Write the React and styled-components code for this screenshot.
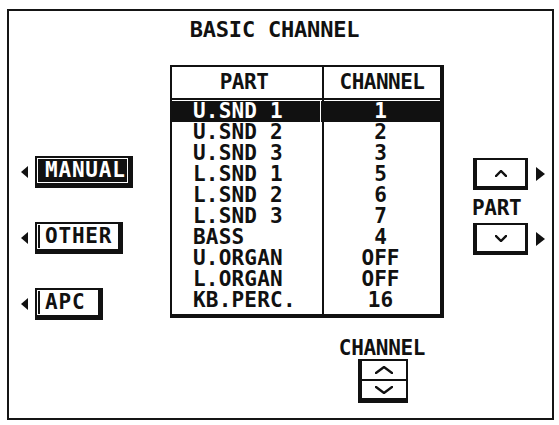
import React from "react";
import styled, { createGlobalStyle } from "styled-components";

const Global = createGlobalStyle`
  html, body { margin: 0; padding: 0; background: #fff; }
  body { font-family: "DejaVu Sans Mono", "Liberation Mono", monospace; font-weight: bold; color: #111; }
`;

const Frame = styled.div`
  box-sizing: border-box;
  margin: 9px 0 0 7px;
  width: 547px;
  height: 411px;
  border: 2px solid #151515;
  display: grid;
  grid-template-columns: 161px 274px 1fr;
  grid-template-rows: 54px 253px 1fr;
`;

const Title = styled.h1`
  grid-column: 1 / -1;
  margin: 0;
  padding: 8px 12px 0 0;
  text-align: center;
  font-size: 22px;
  line-height: 22px;
  font-weight: bold;
  letter-spacing: -0.2px;
`;

const SideKeys = styled.div`
  display: flex;
  flex-direction: column;
  gap: 34px;
  padding: 91px 0 0 12px;
`;

const KeyRow = styled.div`
  display: flex;
  align-items: center;
  gap: 7px;
`;

const LeftArrow = styled.span`
  width: 0;
  height: 0;
  border-top: 6px solid transparent;
  border-bottom: 6px solid transparent;
  border-right: 7px solid #111;
`;

const RightArrow = styled.span`
  width: 0;
  height: 0;
  border-top: 7px solid transparent;
  border-bottom: 7px solid transparent;
  border-left: 9px solid #111;
`;

const SoftKey = styled.span`
  box-sizing: border-box;
  display: flex;
  width: ${(p) => p.$width}px;
  height: 32px;
  border: 2px solid #111;
  border-right-width: 5px;
  border-bottom-width: 5px;
  padding: 1px;
  background: #fff;
`;

const KeyFace = styled.span`
  flex: 1;
  display: flex;
  align-items: center;
  padding-left: ${(p) => (p.$active ? 7 : 5)}px;
  background: ${(p) => (p.$active ? "#111" : "#fff")};
  color: ${(p) => (p.$active ? "#fff" : "#111")};
  border-left: ${(p) => (p.$active ? "0" : "2px solid #111")};
  font-size: 21px;
  line-height: 21px;
  letter-spacing: 0.8px;
`;

const Table = styled.div`
  box-sizing: border-box;
  border-style: solid;
  border-color: #111;
  border-width: 2px 4px 4px 2px;
  display: flex;
  flex-direction: column;
`;

const HeaderRow = styled.div`
  display: grid;
  grid-template-columns: 152px 1fr;
  height: 31px;
  border-bottom: 2px solid #111;
`;

const HeadCell = styled.div`
  display: flex;
  align-items: center;
  justify-content: center;
  font-size: 21px;
  line-height: 21px;
  letter-spacing: -0.5px;
  border-right: ${(p) => (p.$divider ? "2px solid #111" : "0")};
  padding-right: ${(p) => (p.$divider ? 6 : 0)}px;
`;

const Body = styled.div`
  flex: 1;
  padding: 1px 0 3px;
  background: linear-gradient(
    to right,
    transparent 150px,
    #111 150px,
    #111 152px,
    transparent 152px
  );
`;

const Row = styled.div`
  display: grid;
  grid-template-columns: 152px 1fr;
  height: 21px;
  align-items: center;
  font-size: 21px;
  line-height: 21px;
  color: ${(p) => (p.$selected ? "#fff" : "#111")};
  background: ${(p) =>
    p.$selected
      ? "linear-gradient(to right, #111 148px, #fff 148px, #fff 149px, #111 149px)"
      : "transparent"};
`;

const PartCell = styled.span`
  padding-left: 21px;
  white-space: pre;
  letter-spacing: 0.2px;
`;

const ChannelCell = styled.span`
  text-align: center;
  padding-right: 3px;
`;

const PartNav = styled.div`
  display: flex;
  flex-direction: column;
  align-items: flex-start;
  padding: 93px 0 0 29px;
`;

const NavRow = styled.div`
  display: flex;
  align-items: center;
  gap: 8px;
`;

const StepKey = styled.span`
  box-sizing: border-box;
  width: 55px;
  height: 32px;
  border-style: solid;
  border-color: #111;
  border-width: 2px 3px 4px 4px;
  display: flex;
  align-items: center;
  justify-content: center;
  background: #fff;
`;

const NavLabel = styled.div`
  font-size: 21px;
  line-height: 21px;
  margin: 8px 0 4px -1px;
  letter-spacing: -0.3px;
`;

const ChannelCtl = styled.div`
  grid-column: 2;
  display: flex;
  flex-direction: column;
  align-items: center;
  padding-left: 152px;
`;

const CtlLabel = styled.div`
  margin-top: 20px;
  font-size: 21px;
  line-height: 21px;
  letter-spacing: -0.3px;
  padding-right: 2px;
`;

const Rocker = styled.div`
  box-sizing: border-box;
  width: 50px;
  height: 44px;
  border-style: solid;
  border-color: #111;
  border-width: 2px 2px 5px 4px;
  display: grid;
  grid-template-rows: 18px 1fr;
`;

const RockerHalf = styled.div`
  display: flex;
  align-items: center;
  justify-content: center;
  border-top: ${(p) => (p.$lower ? "2px solid #111" : "0")};
`;

const Chevron = ({ dir, w, h, sw = 2.4 }) => (
  <svg width={w} height={h} viewBox={`0 0 ${w} ${h}`}>
    <polyline
      points={
        dir === "up"
          ? `1,${h - 1} ${w / 2},1 ${w - 1},${h - 1}`
          : `1,1 ${w / 2},${h - 1} ${w - 1},1`
      }
      fill="none"
      stroke="#111"
      strokeWidth={sw}
      strokeLinecap="square"
    />
  </svg>
);

const rows = [
  ["U.SND 1", "1"],
  ["U.SND 2", "2"],
  ["U.SND 3", "3"],
  ["L.SND 1", "5"],
  ["L.SND 2", "6"],
  ["L.SND 3", "7"],
  ["BASS", "4"],
  ["U.ORGAN", "OFF"],
  ["L.ORGAN", "OFF"],
  ["KB.PERC.", "16"],
];

const keys = [
  { label: "MANUAL", width: 98, active: true },
  { label: "OTHER", width: 88, active: false },
  { label: "APC", width: 68, active: false },
];

export default function App() {
  return (
    <>
      <Global />
      <Frame>
        <Title>BASIC CHANNEL</Title>
        <SideKeys>
          {keys.map((k) => (
            <KeyRow key={k.label}>
              <LeftArrow />
              <SoftKey $width={k.width}>
                <KeyFace $active={k.active}>{k.label}</KeyFace>
              </SoftKey>
            </KeyRow>
          ))}
        </SideKeys>
        <Table>
          <HeaderRow>
            <HeadCell $divider>PART</HeadCell>
            <HeadCell>CHANNEL</HeadCell>
          </HeaderRow>
          <Body>
            {rows.map(([part, ch], i) => (
              <Row key={part} $selected={i === 0}>
                <PartCell>{part}</PartCell>
                <ChannelCell>{ch}</ChannelCell>
              </Row>
            ))}
          </Body>
        </Table>
        <PartNav>
          <NavRow>
            <StepKey>
              <Chevron dir="up" w={12} h={7} />
            </StepKey>
            <RightArrow />
          </NavRow>
          <NavLabel>PART</NavLabel>
          <NavRow>
            <StepKey>
              <Chevron dir="down" w={12} h={7} />
            </StepKey>
            <RightArrow />
          </NavRow>
        </PartNav>
        <ChannelCtl>
          <CtlLabel>CHANNEL</CtlLabel>
          <Rocker>
            <RockerHalf>
              <Chevron dir="up" w={18} h={8} />
            </RockerHalf>
            <RockerHalf $lower>
              <Chevron dir="down" w={18} h={8} />
            </RockerHalf>
          </Rocker>
        </ChannelCtl>
      </Frame>
    </>
  );
}
